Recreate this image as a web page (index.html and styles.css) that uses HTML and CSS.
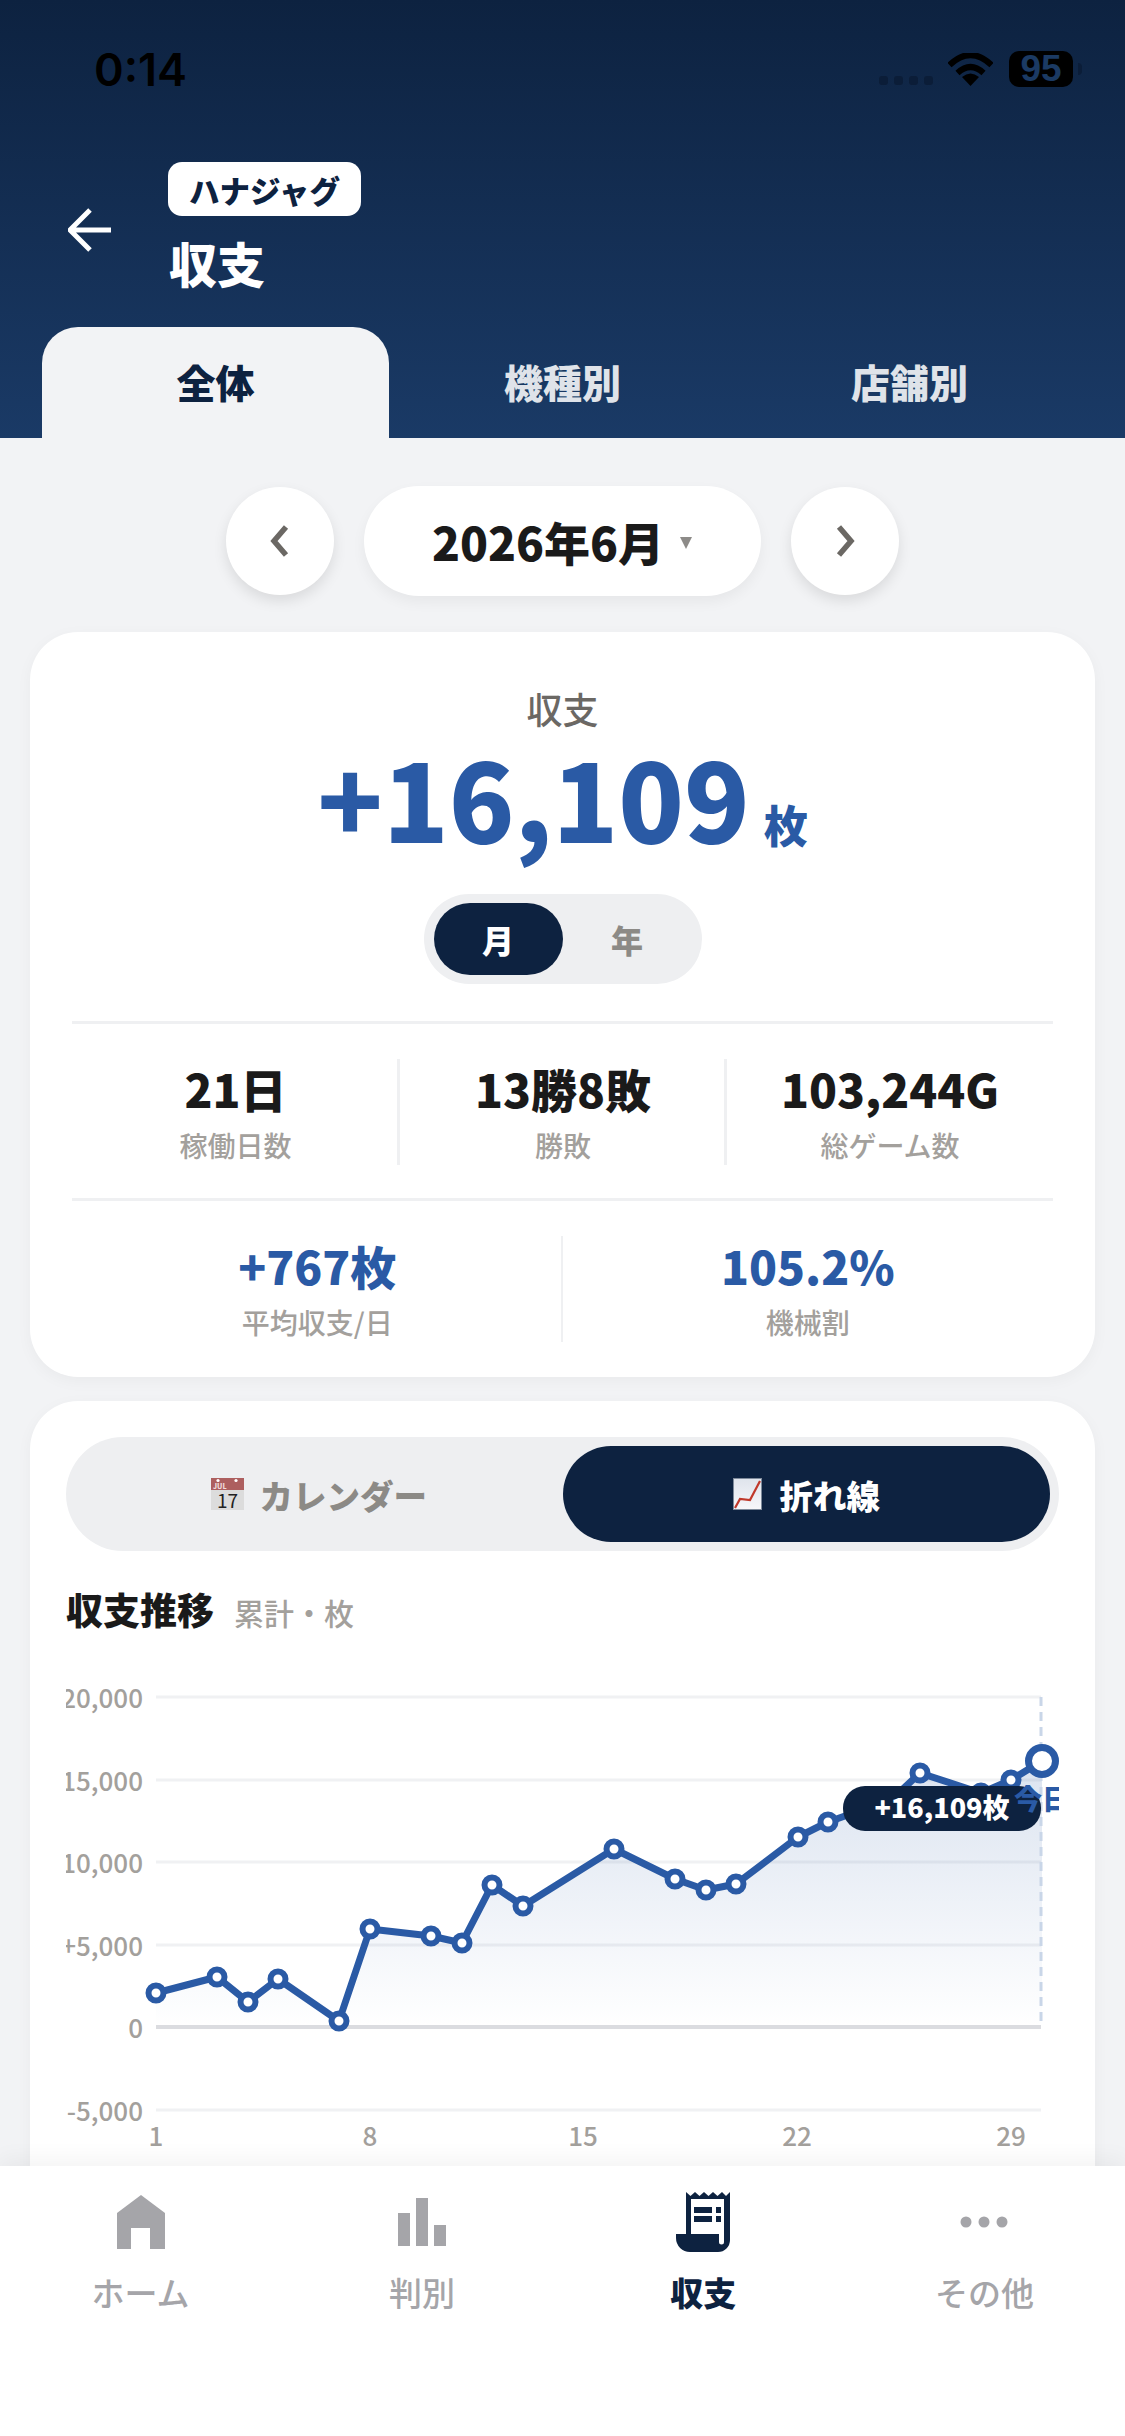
FILE: index.html
```html
<!DOCTYPE html>
<html lang="ja">
<head>
    <meta charset="utf-8" />
    <title>収支</title>
    <link rel="stylesheet" href="styles.css">
</head>
<body>
    <div class="phone">

        <header class="head">
            <div class="status">
                <span class="time">0:14</span>
                <div class="status-right">
                    <span class="cell-dots"><i></i><i></i><i></i><i></i></span>
                    <svg class="wifi" viewBox="0 0 45 33">
                        <path class="wifi-arc" d="M1.500 12 Q22.500 -8 43.500 12" />
                        <path class="wifi-arc" d="M9.500 20 Q22.500 8 35.500 20" />
                        <path class="wifi-dot" d="M22.500 33 L14 24 Q22.500 17 31 24 Z" />
                    </svg>
                    <span class="battery">95</span>
                    <span class="battery-cap"></span>
                </div>
            </div>

            <div class="nav">
                <svg class="back" viewBox="0 0 44 44">
                    <path d="M43 22 H3 M22 2 L2 22 L22 42" />
                </svg>
                <div class="nav-text">
                    <span class="chip">ハナジャグ</span>
                    <h1 class="title">収支</h1>
                </div>
            </div>

            <div class="tabs">
                <div class="tab tab-on">全体</div>
                <div class="tab">機種別</div>
                <div class="tab">店舗別</div>
            </div>
        </header>

        <main class="main">
            <div class="month-nav">
                <button class="round-btn">
                    <svg viewBox="0 0 24 36"><path d="M18 4 L6 18 L18 32" /></svg>
                </button>
                <div class="month-pill">
                    <span class="month-text">2026年6月</span>
                    <span class="month-caret"></span>
                </div>
                <button class="round-btn">
                    <svg viewBox="0 0 24 36"><path d="M6 4 L18 18 L6 32" /></svg>
                </button>
            </div>

            <section class="card summary">
                <div class="sum-label">収支</div>
                <div class="sum-value">+16,109<span class="sum-unit">枚</span></div>
                <div class="toggle">
                    <span class="toggle-item toggle-on">月</span>
                    <span class="toggle-item">年</span>
                </div>

                <div class="stats stats3">
                    <div class="stat">
                        <div class="stat-val">21日</div>
                        <div class="stat-label">稼働日数</div>
                    </div>
                    <div class="stat">
                        <div class="stat-val">13勝8敗</div>
                        <div class="stat-label">勝敗</div>
                    </div>
                    <div class="stat">
                        <div class="stat-val">103,244G</div>
                        <div class="stat-label">総ゲーム数</div>
                    </div>
                </div>

                <div class="stats stats2">
                    <div class="stat">
                        <div class="stat-val blue">+767枚</div>
                        <div class="stat-label">平均収支/日</div>
                    </div>
                    <div class="stat">
                        <div class="stat-val blue">105.2%</div>
                        <div class="stat-label">機械割</div>
                    </div>
                </div>
            </section>

            <section class="card graph">
                <div class="segment">
                    <div class="seg-item">
                        <svg class="emoji" viewBox="0 0 33 32">
                            <rect class="cal-page" x="0" y="0" width="33" height="32" />
                            <rect class="cal-top" x="0" y="0" width="33" height="12" />
                            <circle class="cal-ring" cx="7" cy="2.5" r="1.6" />
                            <circle class="cal-ring" cx="25" cy="2.5" r="1.6" />
                            <text class="cal-month" x="2" y="10.5">JUL</text>
                            <text class="cal-day" x="16.5" y="30">17</text>
                        </svg>
                        カレンダー
                    </div>
                    <div class="seg-item seg-on">
                        <svg class="emoji" viewBox="0 0 29 32">
                            <defs>
                                <linearGradient id="chartPaper" x1="0" y1="0" x2="0" y2="1">
                                    <stop offset="0" stop-color="#dfe4ec" />
                                    <stop offset="1" stop-color="#f7f7fa" />
                                </linearGradient>
                            </defs>
                            <rect class="chart-paper" x="0.5" y="0.5" width="28" height="31" />
                            <path class="chart-red" d="M2 30 L7 21 L17 22 L27 3" />
                        </svg>
                        折れ線
                    </div>
                </div>

                <h2 class="graph-title">収支推移<span class="graph-sub">累計・枚</span></h2>

                <svg class="chart" viewBox="0 0 993 530">
                    <defs>
                        <linearGradient id="areaFill" gradientUnits="userSpaceOnUse" x1="0" y1="99" x2="0" y2="365">
                            <stop offset="0" stop-color="#2a5aa5" stop-opacity="0.17" />
                            <stop offset="1" stop-color="#2a5aa5" stop-opacity="0" />
                        </linearGradient>
                    </defs>

                    <line class="grid" x1="90" y1="35" x2="975" y2="35" />
                    <line class="grid" x1="90" y1="118" x2="975" y2="118" />
                    <line class="grid" x1="90" y1="200" x2="975" y2="200" />
                    <line class="grid" x1="90" y1="283" x2="975" y2="283" />
                    <line class="grid-zero" x1="90" y1="365" x2="975" y2="365" />
                    <line class="grid" x1="90" y1="448" x2="975" y2="448" />

                    <text class="axis axis-y" x="77" y="46">20,000</text>
                    <text class="axis axis-y" x="77" y="129">15,000</text>
                    <text class="axis axis-y" x="77" y="211">10,000</text>
                    <text class="axis axis-y" x="77" y="294">+5,000</text>
                    <text class="axis axis-y" x="77" y="376">0</text>
                    <text class="axis axis-y" x="77" y="459">-5,000</text>

                    <text class="axis axis-x" x="90" y="484">1</text>
                    <text class="axis axis-x" x="304" y="484">8</text>
                    <text class="axis axis-x" x="517" y="484">15</text>
                    <text class="axis axis-x" x="731" y="484">22</text>
                    <text class="axis axis-x" x="945" y="484">29</text>

                    <polygon fill="url(#areaFill)" points="90,331 151,315 182,340 212,317 273,359 304,267 365,274 396,281 426,223 457,244 548,187 609,217 640,228 670,222 732,175 762,160 793,149 823,140 854,111 915,131 945,118 976,99 976,365 90,365" />
                    <line class="today-line" x1="975" y1="35" x2="975" y2="365" />
                    <polyline class="line" points="90,331 151,315 182,340 212,317 273,359 304,267 365,274 396,281 426,223 457,244 548,187 609,217 640,228 670,222 732,175 762,160 793,149 823,140 854,111 915,131 945,118 976,99" />

                    <circle class="pt" cx="90" cy="331" r="7.5" />
                    <circle class="pt" cx="151" cy="315" r="7.5" />
                    <circle class="pt" cx="182" cy="340" r="7.5" />
                    <circle class="pt" cx="212" cy="317" r="7.5" />
                    <circle class="pt" cx="273" cy="359" r="7.5" />
                    <circle class="pt" cx="304" cy="267" r="7.5" />
                    <circle class="pt" cx="365" cy="274" r="7.5" />
                    <circle class="pt" cx="396" cy="281" r="7.5" />
                    <circle class="pt" cx="426" cy="223" r="7.5" />
                    <circle class="pt" cx="457" cy="244" r="7.5" />
                    <circle class="pt" cx="548" cy="187" r="7.5" />
                    <circle class="pt" cx="609" cy="217" r="7.5" />
                    <circle class="pt" cx="640" cy="228" r="7.5" />
                    <circle class="pt" cx="670" cy="222" r="7.5" />
                    <circle class="pt" cx="732" cy="175" r="7.5" />
                    <circle class="pt" cx="762" cy="160" r="7.5" />
                    <circle class="pt" cx="854" cy="111" r="7.5" />
                    <circle class="pt" cx="915" cy="131" r="7.5" />
                    <circle class="pt" cx="945" cy="118" r="7.5" />
                    <circle class="pt-last" cx="976" cy="99" r="13.5" />

                    <rect class="tip" x="777" y="124" width="198" height="45" rx="22" />
                    <text class="tip-text" x="876" y="156">+16,109枚</text>
                    <text class="today-text" x="976" y="148">今日</text>
                </svg>
            </section>
        </main>

        <nav class="tabbar">
            <div class="bar-item">
                <svg class="bar-icon" viewBox="0 0 60 60">
                    <path d="M30 3 L54 21 V57 H39 V36 H20 V57 H6 V21 Z" />
                </svg>
                <span>ホーム</span>
            </div>
            <div class="bar-item">
                <svg class="bar-icon" viewBox="0 0 60 60">
                    <rect x="6" y="21" width="12" height="33" />
                    <rect x="24" y="6" width="12" height="48" />
                    <rect x="42" y="33" width="12" height="21" />
                </svg>
                <span>判別</span>
            </div>
            <div class="bar-item bar-on">
                <svg class="bar-icon" viewBox="-3 0 60 60">
                    <path fill-rule="evenodd" d="M10 0 L14.500 4 L19 0 L23.500 4 L28 0 L32.500 4 L37 0 L41.500 4 L46 0 L50 4 L54 0 V48 A12 12 0 0 1 42 60 H14 A14 14 0 0 1 0 46 V42 H10 Z M15 7 V42 H43 V50 A2.500 2.500 0 0 0 48 50 V7 Z M18 15 H36 V21 H18 Z M40 15 H45 V21 H40 Z M18 24 H36 V30 H18 Z M40 24 H45 V30 H40 Z" />
                </svg>
                <span>収支</span>
            </div>
            <div class="bar-item">
                <svg class="bar-icon" viewBox="0 0 60 60">
                    <circle cx="12" cy="30" r="5.500" />
                    <circle cx="30" cy="30" r="5.500" />
                    <circle cx="48" cy="30" r="5.500" />
                </svg>
                <span>その他</span>
            </div>
        </nav>

    </div>
</body>
</html>
```

FILE: styles.css
```css
* {
    box-sizing: border-box;
}

body {
    margin: 0;
    background: #f2f3f5;
    font-family: "Noto Sans CJK JP", "Noto Sans", sans-serif;
    color: #1a1a1a;
}

.phone {
    width: 1125px;
    height: 2436px;
    display: flex;
    flex-direction: column;
    overflow: hidden;
    background: #f2f3f5;
}

/* header */
.head {
    height: 438px;
    flex: none;
    background: linear-gradient(180deg, #0d2240 0%, #1a3a66 100%);
}

.status {
    height: 138px;
    padding: 0 43px 0 94px;
    display: flex;
    align-items: center;
    justify-content: space-between;
}

.time {
    font-family: "Inter", sans-serif;
    font-size: 45px;
    font-weight: 600;
    color: #000;
}

.status-right {
    display: flex;
    align-items: center;
}

.cell-dots {
    display: flex;
    gap: 6px;
    margin: 23px 15px 0 0;
}

.cell-dots i {
    width: 9px;
    height: 9px;
    border-radius: 3px;
    background: #0b1d38;
}

.wifi {
    width: 45px;
    height: 33px;
    margin-right: 16px;
}

.wifi-arc {
    fill: none;
    stroke: #000;
    stroke-width: 6;
}

.wifi-dot {
    fill: #000;
}

.battery {
    width: 64px;
    height: 36px;
    border-radius: 10px;
    background: #000;
    color: #1b3a63;
    font-family: "Liberation Sans", sans-serif;
    font-size: 37px;
    font-weight: 700;
    line-height: 36px;
    text-align: center;
}

.battery-cap {
    width: 4px;
    height: 12px;
    margin-left: 5px;
    border-radius: 0 6px 6px 0;
    background: #0b1d38;
}

.nav {
    height: 189px;
    padding: 24px 0 0 68px;
    display: flex;
    align-items: flex-start;
}

.back {
    width: 44px;
    height: 44px;
    margin: 46px 56px 0 0;
}

.back path {
    fill: none;
    stroke: #fff;
    stroke-width: 5;
}

.nav-text {
    display: flex;
    flex-direction: column;
    align-items: flex-start;
}

.chip {
    height: 54px;
    padding: 0 21px;
    border-radius: 14px;
    background: #fff;
    color: #0d2240;
    font-size: 30.500px;
    font-weight: 800;
    line-height: 56px;
}

.title {
    margin: 19px 0 0 1px;
    color: #fff;
    font-size: 48px;
    font-weight: 800;
    line-height: 54px;
}

.tabs {
    height: 111px;
    padding: 0 42px;
    display: grid;
    grid-template-columns: repeat(3, 347px);
}

.tab {
    color: #dfe3e9;
    font-size: 39px;
    font-weight: 800;
    line-height: 108px;
    text-align: center;
}

.tab-on {
    border-radius: 36px 36px 0 0;
    background: #f2f3f5;
    color: #0d2240;
}

/* main area */
.main {
    flex: 1;
    min-height: 0;
    padding: 0 30px;
    overflow: hidden;
}

.month-nav {
    margin-top: 48px;
    display: flex;
    align-items: center;
    justify-content: center;
    gap: 30px;
    padding-right: 1px;
}

.round-btn {
    width: 108px;
    height: 108px;
    padding: 0;
    border: none;
    border-radius: 50%;
    background: #fff;
    box-shadow: 0 6px 14px rgba(0, 0, 0, 0.1);
    display: flex;
    align-items: center;
    justify-content: center;
}

.round-btn svg {
    width: 24px;
    height: 36px;
}

.round-btn path {
    fill: none;
    stroke: #6b6864;
    stroke-width: 5.5;
}

.month-pill {
    width: 397px;
    height: 110px;
    border-radius: 55px;
    background: #fff;
    box-shadow: 0 6px 14px rgba(0, 0, 0, 0.05);
    display: flex;
    align-items: center;
    justify-content: center;
    gap: 16px;
}

.month-text {
    font-size: 46px;
    font-weight: 800;
}

.month-caret {
    width: 0;
    height: 0;
    margin-top: 4px;
    border-left: 6px solid transparent;
    border-right: 6px solid transparent;
    border-top: 12px solid #8d8b88;
}

.card {
    border-radius: 48px;
    background: #fff;
    box-shadow: 0 4px 16px rgba(0, 0, 0, 0.04);
}

.summary {
    margin-top: 36px;
    padding: 55px 42px 0;
    height: 745px;
    display: flex;
    flex-direction: column;
    align-items: center;
}

.sum-label {
    color: #6b6864;
    font-size: 36px;
    font-weight: 500;
    line-height: 42px;
}

.sum-value {
    margin-top: 11px;
    color: #2a5aa5;
    font-size: 108px;
    font-weight: 800;
    line-height: 112px;
    white-space: nowrap;
}

.sum-unit {
    margin-left: 14px;
    font-size: 44px;
    line-height: 1;
}

.toggle {
    margin-top: 42px;
    width: 278px;
    height: 90px;
    padding: 9px 10px;
    border-radius: 45px;
    background: #eeeff1;
    display: flex;
}

.toggle-item {
    width: 129px;
    border-radius: 36px;
    color: #8c8a86;
    font-size: 32px;
    font-weight: 800;
    line-height: 72px;
    text-align: center;
}

.toggle-on {
    background: #0d2240;
    color: #fff;
}

.stats {
    width: 981px;
    height: 177px;
    margin-top: 37px;
    padding: 35px 0 34px;
    border-top: 3px solid #eff0f2;
    display: grid;
}

.stats + .stats {
    margin-top: 0;
}

.stats3 {
    grid-template-columns: repeat(3, 1fr);
}

.stats2 {
    grid-template-columns: repeat(2, 1fr);
}

.stat {
    padding-top: 1px;
    text-align: center;
    border-left: 3px solid #eff0f2;
    margin-left: -2px;
}

.stat:first-child {
    border-left: none;
    margin-left: 0;
}

.stats2 .stat {
    border-left-width: 2px;
}

.stat-val {
    font-size: 46px;
    font-weight: 800;
    line-height: 56px;
}

.blue {
    color: #2a5aa5;
}

.stat-label {
    margin-top: 9px;
    color: #a3a09c;
    font-size: 28px;
    font-weight: 500;
    line-height: 40px;
}

.graph {
    margin-top: 24px;
    padding: 36px 36px 60px;
}

.segment {
    height: 114px;
    padding: 9px;
    border-radius: 57px;
    background: #eeeff1;
    display: grid;
    grid-template-columns: 1fr 1fr;
}

.seg-item {
    border-radius: 48px;
    color: #8c8a86;
    font-size: 33.500px;
    font-weight: 800;
    display: flex;
    align-items: center;
    justify-content: center;
    gap: 16px;
}

.seg-on {
    gap: 18px;
    background: #0d2240;
    color: #fff;
}

.emoji {
    height: 32px;
    flex: none;
}

.seg-item:first-child .emoji {
    width: 33px;
}

.seg-on .emoji {
    width: 29px;
}

.cal-page {
    fill: #dcdcdc;
}

.cal-top {
    fill: #ad5f5f;
}

.cal-ring {
    fill: #fff;
}

.cal-month {
    fill: #f0dada;
    font-size: 7px;
}

.cal-day {
    fill: #222;
    font-size: 19px;
    font-weight: 400;
    text-anchor: middle;
}

.chart-paper {
    fill: url(#chartPaper);
    stroke: #7e8a9a;
}

.chart-red {
    fill: none;
    stroke: #c0392b;
    stroke-width: 2.2;
}

.graph-title {
    margin: 33px 0 0;
    font-size: 37px;
    font-weight: 800;
    line-height: 50px;
}

.graph-sub {
    margin-left: 20px;
    color: #a3a09c;
    font-size: 30px;
    font-weight: 500;
}

.chart {
    display: block;
    width: 993px;
    height: 530px;
    margin: 25px 0 0 0;
}

.grid {
    stroke: #f0f1f3;
    stroke-width: 3;
}

.grid-zero {
    stroke: #dbdce0;
    stroke-width: 4;
}

.axis {
    fill: #a3a09c;
    font-size: 26px;
    font-weight: 500;
}

.axis-y {
    text-anchor: end;
}

.axis-x {
    text-anchor: middle;
}

.today-line {
    stroke: #c9d6e8;
    stroke-width: 3;
    stroke-dasharray: 9 6;
}

.line {
    fill: none;
    stroke: #2a5aa5;
    stroke-width: 7;
    stroke-linejoin: round;
}

.pt {
    fill: #fff;
    stroke: #2a5aa5;
    stroke-width: 6;
}

.pt-last {
    fill: #fff;
    stroke: #2a5aa5;
    stroke-width: 7;
}

.today-text {
    fill: #2a5aa5;
    font-size: 28px;
    font-weight: 800;
    text-anchor: middle;
}

.tip {
    fill: #0d2240;
}

.tip-text {
    fill: #fff;
    font-size: 27px;
    font-weight: 800;
    text-anchor: middle;
}

/* bottom bar */
.tabbar {
    position: relative;
    height: 270px;
    flex: none;
    padding-top: 26px;
    background: #fff;
    box-shadow: 0 -6px 22px rgba(0, 0, 0, 0.05);
    display: grid;
    grid-template-columns: repeat(4, 1fr);
}

.bar-item {
    color: #a5a5a9;
    font-size: 33px;
    font-weight: 500;
    line-height: 44px;
    text-align: center;
}

.bar-item span {
    display: block;
    margin-top: 18px;
}

.bar-icon {
    display: block;
    width: 60px;
    height: 60px;
    margin: 0 auto;
    fill: #a5a5a9;
}

.bar-on {
    color: #0d2240;
    font-weight: 800;
}

.bar-on .bar-icon {
    fill: #0d2240;
}
```
